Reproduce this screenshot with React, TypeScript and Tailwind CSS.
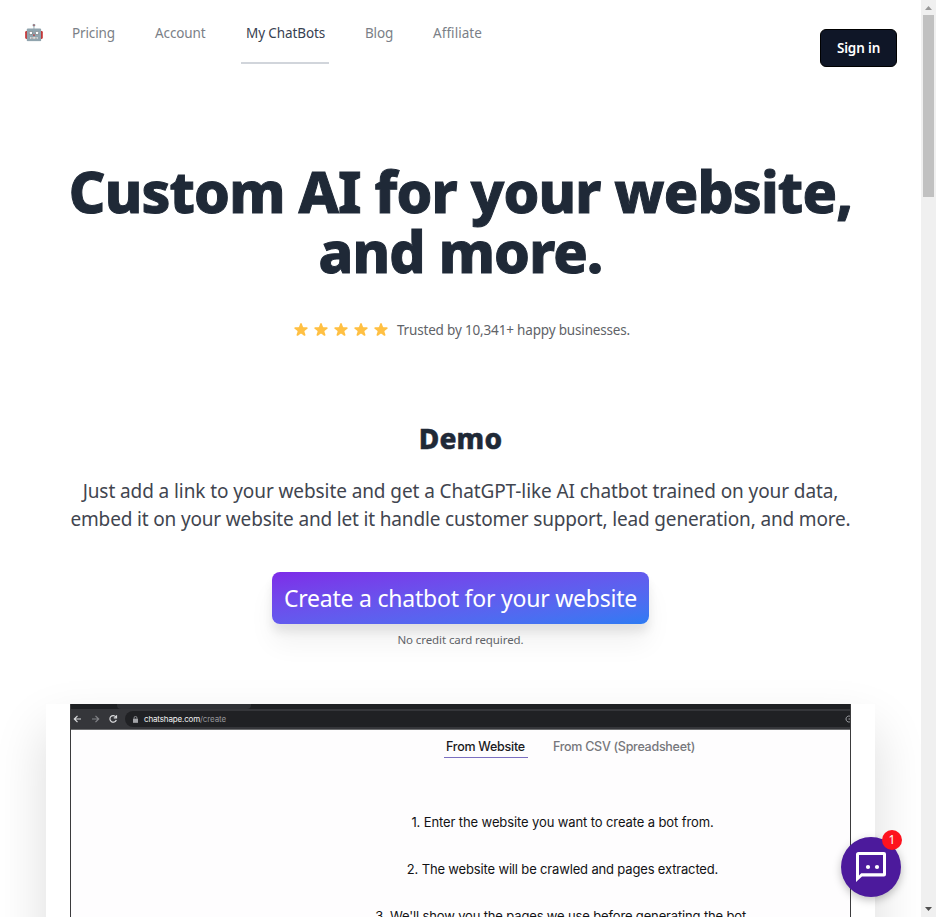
const navItems = [
  { label: "Pricing", active: false, style: "w-[43px] tracking-[-0.13px]" },
  { label: "Account", active: false, style: "w-[50px] tracking-[-0.1px]" },
  { label: "My ChatBots", active: true, style: "w-20 pl-px tracking-[-0.1px]" },
  { label: "Blog", active: false, style: "w-[28px] tracking-[-0.18px]" },
  { label: "Affiliate", active: false, style: "w-[49px] tracking-[0.06px]" },
];

function Header() {
  return (
    <header className="flex h-24 items-start justify-between pl-6 pr-6">
      <div className="flex">
        <span className="w-5 pt-[21px] text-[16px] leading-6 [font-family:'Noto_Color_Emoji']">🤖</span>
        <nav className="ml-6 flex gap-8">
          {navItems.map((item) => (
            <a
              key={item.label}
              href="#"
              className={
                item.active
                  ? "h-16 border-b-2 border-[#d1d5db] px-1 pt-[23px] text-[13.5px] leading-5 text-[#374151]"
                  : "h-16 border-b-2 border-transparent px-1 pt-[23px] text-[13.5px] leading-5 text-[#7b7f87]"
              }
            >
              <span className={"block whitespace-nowrap " + item.style}>{item.label}</span>
            </a>
          ))}
        </nav>
      </div>
      <button className="mt-[29px] h-[38px] w-[77px] rounded-md border border-black bg-[#0f1627] text-[13.5px] font-semibold tracking-[-0.15px] text-white">
        Sign in
      </button>
    </header>
  );
}

function Star() {
  return (
    <svg viewBox="0 0 20 20" className="size-5 p-px" fill="#ffc043">
      <path d="M9.049 2.927c.3-.921 1.603-.921 1.902 0l1.07 3.292a1 1 0 00.95.69h3.462c.969 0 1.371 1.24.588 1.81l-2.8 2.034a1 1 0 00-.364 1.118l1.07 3.292c.3.921-.755 1.688-1.54 1.118l-2.8-2.034a1 1 0 00-1.175 0l-2.8 2.034c-.784.57-1.838-.197-1.539-1.118l1.07-3.292a1 1 0 00-.364-1.118L2.98 8.72c-.783-.57-.38-1.81.588-1.81h3.461a1 1 0 00.951-.69l1.07-3.292z" />
    </svg>
  );
}

function Hero() {
  return (
    <section className="flex flex-col items-center whitespace-nowrap pt-16">
      <h1 className="mt-[30px] text-center text-[57px] font-extrabold leading-[60px] text-[#1f2937] [-webkit-text-stroke:1px_#1f2937]">
        <span className="block tracking-[-0.86px]">Custom AI for your website,</span>
        <span className="block tracking-[-0.8px]">and more.</span>
      </h1>
      <div className="mt-[39px] flex items-center">
        <div className="flex">
          {[0, 1, 2, 3, 4].map((n) => (
            <Star key={n} />
          ))}
        </div>
        <p className="ml-1.5 text-[13.5px] leading-5 tracking-[-0.17px] text-[#5f6368]">
          Trusted by 10,341+ happy businesses.
        </p>
      </div>
      <h2 className="mt-20 text-[28px] font-extrabold leading-9 tracking-[0.2px] text-[#1f2937] [-webkit-text-stroke:0.5px_#1f2937]">
        Demo
      </h2>
      <p className="mt-[21px] text-center text-[19px] leading-7 text-[#41454f]">
        <span className="block tracking-[-0.09px]">
          Just add a link to your website and get a ChatGPT-like AI chatbot trained on your data,
        </span>
        <span className="block tracking-[-0.16px]">
          embed it on your website and let it handle customer support, lead generation, and more.
        </span>
      </p>
      <button className="mt-[39px] h-[52px] w-[377px] rounded-lg bg-linear-to-br from-[#7d2ae8] to-[#2b7bf3] text-[23px] tracking-[-0.22px] text-white shadow-[0_20px_26px_rgba(0,0,0,0.05),0_8px_10px_rgba(0,0,0,0.08)]">
        Create a chatbot for your website
      </button>
      <p className="relative mt-2 text-[11.5px] leading-4 tracking-[-0.09px] text-[#5f6368]">No credit card required.</p>
    </section>
  );
}

function BrowserBar() {
  return (
    <div className="border-b border-[#6d6e70] bg-[#35363a]">
      <div className="flex h-[5px] bg-[#1e2023]">
        <div className="ml-[46px] w-[134px] rounded-b-sm bg-[#2f3135]" />
      </div>
      <div className="flex h-5 items-center overflow-hidden">
        <svg viewBox="0 0 48 20" className="h-5 w-12 shrink-0" fill="none" strokeWidth="1.2">
          <path d="M10 10H3.500M6.500 6.800 3.300 10 6.500 13.200" stroke="#dadbdd" />
          <path d="M21 10H27.500M24.500 6.800 27.700 10 24.500 13.200" stroke="#828387" />
          <path d="M44.800 7.800A3.300 3.300 0 1 0 45.300 11M45.500 6.200v2.600h-2.700" stroke="#dadbdd" />
        </svg>
        <div className="ml-[6px] flex h-4 w-[760px] shrink-0 items-center rounded-l-full bg-[#202124] pl-2">
          <svg viewBox="0 0 6 8" className="h-[7px] w-[5px]" fill="#a2a3a7">
            <path d="M0 3h6v5H0z" />
            <path d="M1.3 3V2a1.7 1.7 0 0 1 3.4 0v1" fill="none" stroke="#a2a3a7" />
          </svg>
          <span className="ml-1.5 w-14 text-[8px] leading-4 tracking-[-0.15px] text-[#f1f1f2]">chatshape.com</span>
          <span className="w-[26px] text-[8px] leading-4 tracking-[-0.1px] text-[#95969a]">/create</span>
          <svg viewBox="0 0 8 8" className="ml-[619px] size-2" fill="none" stroke="#a2a3a7" strokeWidth="1">
            <path d="M6 1.800A3 3 0 1 0 7 4H3.500" />
          </svg>
        </div>
      </div>
    </div>
  );
}

function DemoVideo() {
  return (
    <div className="mx-[46px] mt-14 h-[400px] shrink-0 bg-white px-6 shadow-[0_25px_50px_rgba(0,0,0,0.14)]">
      <div className="h-full w-[781px] overflow-hidden border-x border-[#3b3b3d] bg-[#fefdfe] font-['Inter',sans-serif]">
        <BrowserBar />
        <div className="flex h-[27px] whitespace-nowrap pl-[373px] text-[12.5px] font-medium leading-[18px]">
          <span className="mt-[8px] h-5 w-[84px] border-b-[1.5px] border-[#7b6fc0] pl-0.5 tracking-[-0.25px] text-[#1a1a22]">
            From Website
          </span>
          <span className="ml-[25px] mt-[8px] tracking-[-0.28px] text-[#77777c]">From CSV (Spreadsheet)</span>
        </div>
        <div className="mt-[55px] flex w-[983px] flex-col items-center gap-[27px] whitespace-nowrap text-[13px] leading-5 text-[#121214]">
          <p className="tracking-[-0.11px]">1. Enter the website you want to create a bot from.</p>
          <p className="tracking-[-0.16px]">2. The website will be crawled and pages extracted.</p>
          <p className="tracking-[-0.15px]">3. We&apos;ll show you the pages we use before generating the bot.</p>
        </div>
      </div>
    </div>
  );
}

function ChatBubble() {
  return (
    <button className="absolute left-[841px] top-[837px] size-[60px] rounded-full bg-[#4c1a9c] shadow-[0_3px_8px_rgba(0,0,0,0.25)]">
      <svg viewBox="0 0 60 60" className="size-[60px]">
        <path
          d="M17.5 15H43a2 2 0 0 1 2 2v20.500a2 2 0 0 1-2 2H21L15 45V17.500A2.500 2.500 0 0 1 17.500 15ZM18 18V38.500l2.200-2.300H42V18Z"
          fill="#fff"
          fillRule="evenodd"
        />
        <circle cx="27" cy="30" r="2.100" fill="#fff" />
        <circle cx="36" cy="30" r="2.100" fill="#fff" />
      </svg>
      <span className="absolute -right-px -top-[7px] size-5 rounded-full bg-[#fd121e] text-center text-[12px] leading-5 text-white">
        1
      </span>
    </button>
  );
}

function Scrollbar() {
  return (
    <div className="flex w-[15px] shrink-0 flex-col items-center bg-[#f0f0f0]">
      <svg viewBox="0 0 15 15" className="size-[15px]">
        <path d="M4 10h7L7.500 6Z" fill="#989898" />
      </svg>
      <div className="h-[182px] w-[11px] bg-[#c1c1c1]" />
      <svg viewBox="0 0 15 15" className="mt-auto size-[15px]">
        <path d="M4 5h7L7.500 9Z" fill="#505050" />
      </svg>
    </div>
  );
}

export default function App() {
  return (
    <div className="relative flex h-[917px] w-[936px] overflow-hidden bg-white font-['Noto_Sans',sans-serif]">
      <main className="flex w-[921px] flex-col overflow-hidden">
        <Header />
        <Hero />
        <DemoVideo />
      </main>
      <Scrollbar />
      <ChatBubble />
    </div>
  );
}
